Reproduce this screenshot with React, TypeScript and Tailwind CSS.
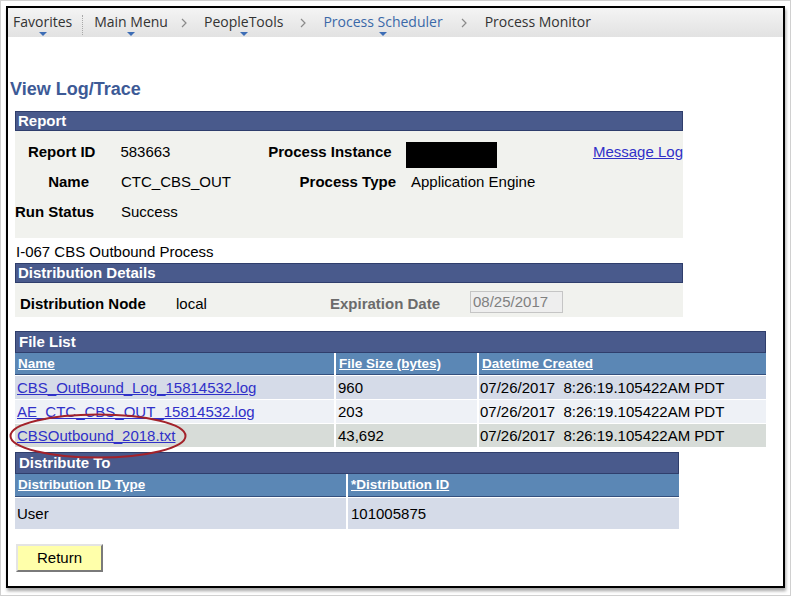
import { ReactNode } from 'react';

const FILES = [
    { name: 'CBS_OutBound_Log_15814532.log', size: '960', bg: 'bg-[#d5dbe8]' },
    { name: 'AE_CTC_CBS_OUT_15814532.log', size: '203', bg: 'bg-[#eef1f6]' },
    { name: 'CBSOutbound_2018.txt', size: '43,692', bg: 'bg-[#d7dcd8]' },
];

function NavItem({ label, blue, menu, className }: { label: string; blue?: boolean; menu?: boolean; className?: string }) {
    return (
        <div className={`flex flex-col items-center ${className ?? ''}`}>
            <span className={`leading-[19px] whitespace-nowrap ${blue ? 'text-[#3a68a8]' : 'text-[#333333]'}`}>{label}</span>
            {menu && (
                <span className="mt-[1px] h-0 w-0 border-x-[4px] border-t-[4px] border-x-transparent border-t-[#3d6db5]" />
            )}
        </div>
    );
}

function Chevron({ className }: { className?: string }) {
    return (
        <svg width="6" height="10" viewBox="0 0 6 10" className={`mt-[6px] shrink-0 ${className ?? ''}`}>
            <path d="M1 1 L5 5 L1 9" fill="none" stroke="#8a8a8a" strokeWidth="1.2" />
        </svg>
    );
}

function SectionBar({ children, className }: { children: ReactNode; className?: string }) {
    return (
        <div className={`border border-[#2f3e6c] bg-[#495a8c] pl-[2px] font-bold leading-[18px] text-white ${className ?? ''}`}>
            {children}
        </div>
    );
}

function ColHead({ children, className }: { children: ReactNode; className?: string }) {
    return (
        <div className={`h-[22px] border-b border-[#34507e] bg-[#5b87b5] pl-[3px] text-[13.5px] font-bold leading-[21px] text-white ${className ?? ''}`}>
            <span className="underline">{children}</span>
        </div>
    );
}

export default function App() {
    return (
        <div className="relative h-[596px] w-[791px] border border-[#d0d0d0] bg-white pl-[5px] pt-[5px] font-['Liberation_Sans',Arial,sans-serif] text-[15px] text-black">
            <div className="h-[582px] w-[779px] border-2 border-black shadow-[1px_3px_3px_rgba(0,0,0,0.35)]">
                {/* Breadcrumb nav */}
                <div className="flex h-[29px] items-start bg-linear-to-b from-[#f4f4f4] to-[#e2e2e2] pl-[5px] pt-[4px] font-['Open_Sans',sans-serif] text-[14px]">
                    <NavItem label="Favorites" menu />
                    <div className="ml-[10px] mt-[3px] h-[20px] border-l border-dotted border-[#a8a8a8]" />
                    <NavItem label="Main Menu" menu className="ml-[11px]" />
                    <Chevron className="ml-[13px]" />
                    <NavItem label="PeopleTools" menu className="ml-[17px]" />
                    <Chevron className="ml-[17px]" />
                    <NavItem label="Process Scheduler" blue menu className="ml-[17px]" />
                    <Chevron className="ml-[18px]" />
                    <NavItem label="Process Monitor" className="ml-[18px]" />
                </div>

                {/* Title */}
                <h1 className="mt-[41px] h-[22px] pl-[2px] text-[18px] font-bold leading-[22px] text-[#3d5a96]">
                    View Log/Trace
                </h1>

                <div className="px-[7px]">
                    {/* Report */}
                    <SectionBar className="mt-[11px] h-[20px] w-[668px]">Report</SectionBar>
                    <div className="h-[107px] w-[668px] bg-[#f1f2ee] pt-[6px]">
                        <div className="flex h-[30px] leading-[30px]">
                            <div className="w-[81px] text-right font-bold">Report ID</div>
                            <div className="ml-[25px] w-[149px]">583663</div>
                            <div className="w-[124px] text-right font-bold whitespace-nowrap">Process Instance</div>
                            <div className="ml-[14px] mt-[5px] h-[26px] w-[92px] bg-black" />
                            <a href="#" className="ml-[96px] text-[#3030c8] underline whitespace-nowrap">Message Log</a>
                        </div>
                        <div className="flex h-[30px] leading-[30px]">
                            <div className="w-[81px] pr-[7px] text-right font-bold">Name</div>
                            <div className="ml-[25px] w-[149px]">CTC_CBS_OUT</div>
                            <div className="w-[126px] text-right font-bold whitespace-nowrap">Process Type</div>
                            <div className="ml-[15px] whitespace-nowrap">Application Engine</div>
                        </div>
                        <div className="flex h-[30px] leading-[30px]">
                            <div className="w-[81px] pr-[3px] text-right font-bold whitespace-nowrap">Run Status</div>
                            <div className="ml-[25px]">Success</div>
                        </div>
                    </div>
                    <div className="h-[25px] pl-[1px] pt-[4px] leading-[20px]">I-067 CBS Outbound Process</div>

                    {/* Distribution Details */}
                    <SectionBar className="h-[20px] w-[668px]">Distribution Details</SectionBar>
                    <div className="flex h-[34px] w-[668px] bg-[#f1f2ee] pt-[11px] leading-[20px]">
                        <div className="w-[161px] pl-[5px] font-bold whitespace-nowrap">Distribution Node</div>
                        <div className="w-[154px]">local</div>
                        <div className="w-[140px] font-bold whitespace-nowrap text-[#6b6b6b]">Expiration Date</div>
                        <div className="-mt-[3px] h-[22px] w-[93px] border border-[#c5c5c5] bg-[#eeeeee] pl-[2px] leading-[20px] text-[#808080]">
                            08/25/2017
                        </div>
                    </div>

                    {/* File List */}
                    <SectionBar className="mt-[14px] h-[22px] w-[751px] pl-[3px] leading-[20px]">File List</SectionBar>
                    <div className="grid w-[751px] grid-cols-[319px_141px_287px] gap-x-[2px] gap-y-[1px] bg-white">
                        <ColHead>Name</ColHead>
                        <ColHead>File Size (bytes)</ColHead>
                        <ColHead>Datetime Created</ColHead>
                        {FILES.map((f) => (
                            <div key={f.name} className="contents">
                                <div className={`h-[23px] pl-[2px] leading-[23px] ${f.bg}`}>
                                    <a href="#" className="text-[#3030c8] underline">{f.name}</a>
                                </div>
                                <div className={`h-[23px] pl-[2px] leading-[23px] ${f.bg}`}>{f.size}</div>
                                <div className={`h-[23px] pl-[1px] leading-[23px] whitespace-pre ${f.bg}`}>
                                    07/26/2017  8:26:19.105422AM PDT
                                </div>
                            </div>
                        ))}
                    </div>

                    {/* Distribute To */}
                    <SectionBar className="mt-[5px] h-[22px] w-[664px] pl-[3px] leading-[20px]">Distribute To</SectionBar>
                    <div className="grid w-[664px] grid-cols-[331px_331px] gap-x-[2px] gap-y-[1px] bg-white">
                        <ColHead className="h-[23px]">Distribution ID Type</ColHead>
                        <ColHead className="h-[23px]">*Distribution ID</ColHead>
                        <div className="h-[31px] bg-[#d5dbe8] pl-[2px] leading-[31px]">User</div>
                        <div className="h-[31px] bg-[#d5dbe8] pl-[3px] leading-[31px]">101005875</div>
                    </div>

                    <button
                        type="button"
                        className="ml-[1px] mt-[15px] h-[28px] w-[87px] border-2 border-b-[#7a7a7a] border-l-[#e4e4e4] border-r-[#7a7a7a] border-t-[#e4e4e4] bg-[#ffffaa] text-[15px] leading-[22px] text-black"
                    >
                        Return
                    </button>
                </div>
            </div>

            {/* Red annotation ellipse */}
            <svg className="absolute left-[8px] top-[412px]" width="180" height="47" viewBox="0 0 180 47">
                <ellipse cx="89" cy="23" rx="87.5" ry="21.5" fill="none" stroke="#a3222a" strokeWidth="2" />
            </svg>
        </div>
    );
}
